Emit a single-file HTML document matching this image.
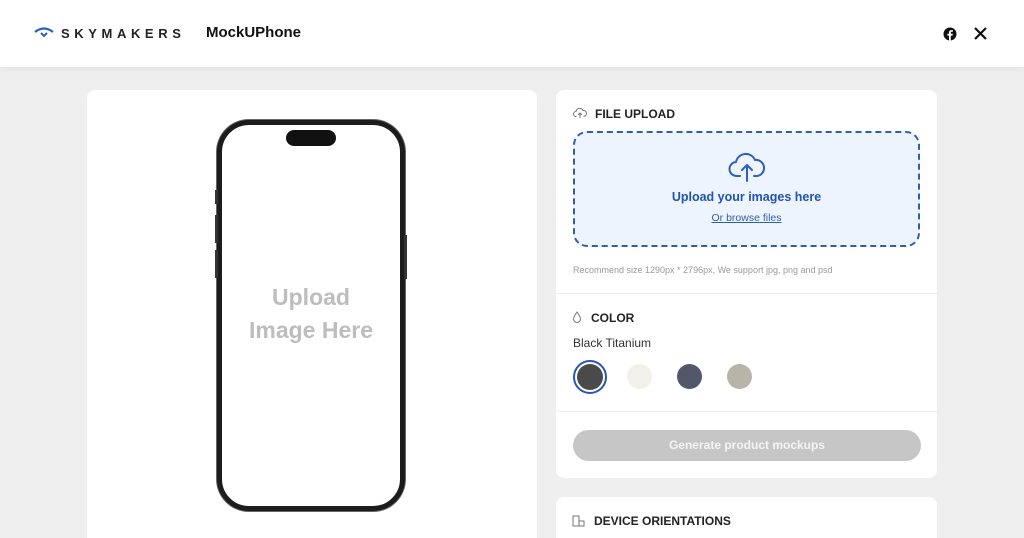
<!DOCTYPE html>
<html><head><meta charset="utf-8"><style>
*{margin:0;padding:0;box-sizing:border-box}
html,body{width:1024px;height:538px;overflow:hidden}
body{background:#efefef;font-family:"Liberation Sans",sans-serif;position:relative}
.hdr{position:absolute;left:0;top:0;width:1024px;height:67px;background:#fff;box-shadow:0 2px 6px rgba(0,0,0,.06)}
.abs{position:absolute}
.card{position:absolute;background:#fff;border-radius:8px}
.title{position:absolute;font-size:12px;font-weight:bold;color:#222}
</style></head><body>
<div class="hdr">
  <svg class="abs" style="left:34px;top:27px" width="20" height="12" viewBox="0 0 20 12"><path d="M1 5 Q10 -2 19 5" stroke="#2b5fc0" stroke-width="2.2" fill="none"/><path d="M7 6 L10 9 L13 6" stroke="#2b5fc0" stroke-width="2" fill="none"/></svg>
  <div class="abs" style="left:61px;top:26px;font-size:13px;font-weight:bold;letter-spacing:4.6px;color:#222">SKYMAKERS</div>
  <div class="abs" style="left:206px;top:24px;font-size:15px;font-weight:bold;color:#111">MockUPhone</div>
  <svg class="abs" style="left:943px;top:27px" width="14" height="14" viewBox="0 0 14 14"><circle cx="7" cy="7" r="6.5" fill="#111"/><path d="M7.8 14V8.6H9.5L9.8 6.8H7.8V5.7C7.8 5.1 8.1 4.8 8.7 4.8H9.9V3.2C9.5 3.1 8.9 3.1 8.4 3.1 7 3.1 6 3.9 6 5.4V6.8H4.4V8.6H6V14Z" fill="#fff"/></svg>
  <svg class="abs" style="left:974px;top:27px" width="13" height="13" viewBox="0 0 13 13"><path d="M1 1L12 12M12 1L1 12" stroke="#111" stroke-width="2.2"/></svg>
</div>

<div class="card" style="left:87px;top:90px;width:450px;height:460px">
  <div class="abs" style="left:130px;top:30px;width:188px;height:391px;border:5px solid #1c1c1c;border-radius:32px;background:#fff;box-shadow:0 0 0 1px #666"></div>
  <div class="abs" style="left:128px;top:100px;width:3px;height:14px;background:#333"></div>
  <div class="abs" style="left:128px;top:125px;width:3px;height:28px;background:#333"></div>
  <div class="abs" style="left:128px;top:160px;width:3px;height:28px;background:#333"></div>
  <div class="abs" style="left:317px;top:145px;width:3px;height:44px;background:#333"></div>
  <div class="abs" style="left:199px;top:40px;width:50px;height:16px;border-radius:8px;background:#111"></div>
  <div class="abs" style="left:124px;top:191px;width:200px;text-align:center;font-size:23px;font-weight:bold;color:#bdbdbd;line-height:33px">Upload<br>Image Here</div>
</div>

<div class="card" style="left:556px;top:90px;width:381px;height:388px">
  <svg class="abs" style="left:17px;top:18px" width="14" height="11" viewBox="0 0 14 11"><path d="M3.5 8.5H3a2.5 2.5 0 0 1 0-5 3.7 3.7 0 0 1 7-1 2.8 2.8 0 0 1 1 5.9h-.5M7 10V5M5 7L7 5 9 7" stroke="#777" stroke-width="1" fill="none"/></svg>
  <div class="title" style="left:39px;top:17px">FILE UPLOAD</div>
  <div class="abs" style="left:17px;top:41px;width:347px;height:116px;border:2px dashed #2d5fb0;border-radius:14px;background:#eef4fd"></div>
  <svg class="abs" style="left:171px;top:62px" width="40" height="30" viewBox="0 0 40 30"><path d="M13 24H10A7 7 0 0 1 9 10 10 10 0 0 1 28 8 8 8 0 0 1 30 24H27M20 29V13M15 18L20 13 25 18" stroke="#2d5fc0" stroke-width="2" fill="none" stroke-linecap="round" stroke-linejoin="round"/></svg>
  <div class="abs" style="left:17px;top:100px;width:347px;text-align:center;font-size:12.5px;font-weight:bold;color:#2253b0">Upload your images here</div>
  <div class="abs" style="left:17px;top:122px;width:347px;text-align:center;font-size:10.5px;color:#2d5fb0;text-decoration:underline">Or browse files</div>
  <div class="abs" style="left:17px;top:175px;font-size:9px;color:#999">Recommend size 1290px * 2796px, We support jpg, png and psd</div>
  <div class="abs" style="left:0;top:203px;width:381px;height:1px;background:#eee"></div>
  <svg class="abs" style="left:16px;top:221px" width="10" height="12" viewBox="0 0 10 12"><path d="M5 1 C3 4 1.5 6 1.5 8 A3.5 3.5 0 0 0 8.5 8 C8.5 6 7 4 5 1Z" stroke="#777" fill="none"/></svg>
  <div class="title" style="left:35px;top:221px">COLOR</div>
  <div class="abs" style="left:17px;top:246px;font-size:12px;color:#333">Black Titanium</div>
  <div class="abs" style="left:17px;top:270px;width:34px;height:34px;border-radius:50%;border:2px solid #2a55b5;padding:2px"><div style="width:26px;height:26px;border-radius:50%;background:#4a4a4a"></div></div>
  <div class="abs" style="left:71px;top:274px;width:25px;height:25px;border-radius:50%;background:#f1f1ea"></div>
  <div class="abs" style="left:121px;top:274px;width:25px;height:25px;border-radius:50%;background:#52586a"></div>
  <div class="abs" style="left:171px;top:274px;width:25px;height:25px;border-radius:50%;background:#b7b5a8"></div>
  <div class="abs" style="left:0;top:321px;width:381px;height:1px;background:#eee"></div>
  <div class="abs" style="left:17px;top:340px;width:348px;height:31px;border-radius:16px;background:#c6c6c6;color:#f4f4f4;font-size:12px;font-weight:bold;text-align:center;line-height:31px">Generate product mockups</div>
</div>

<div class="card" style="left:556px;top:497px;width:381px;height:60px">
  <svg class="abs" style="left:16px;top:18px" width="13" height="12" viewBox="0 0 13 12"><rect x="1" y="1" width="6" height="10" stroke="#777" fill="none"/><rect x="7" y="6" width="5" height="5" stroke="#777" fill="none"/></svg>
  <div class="title" style="left:38px;top:17px">DEVICE ORIENTATIONS</div>
</div>
</body></html>
